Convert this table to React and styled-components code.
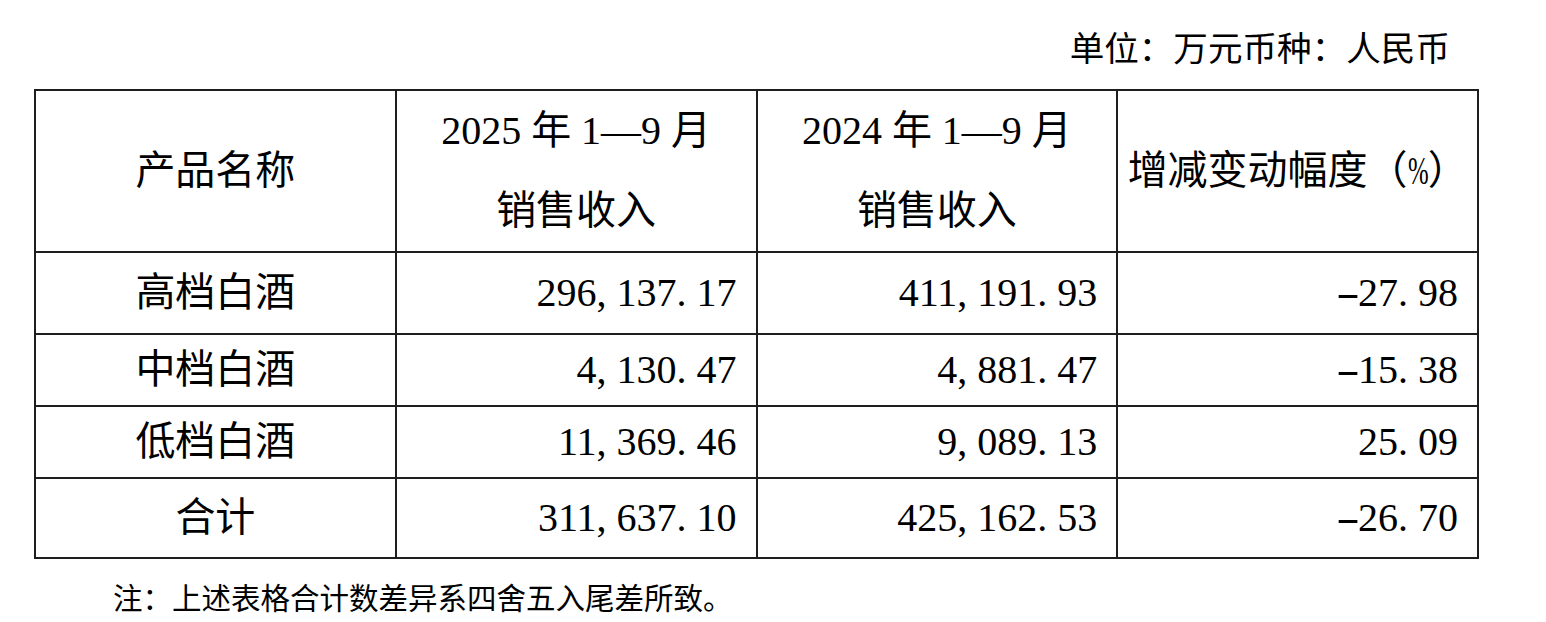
import React from 'react';
import styled, { createGlobalStyle } from 'styled-components';

const GlobalStyle = createGlobalStyle`
  html, body {
    margin: 0;
    padding: 0;
    background: #fff;
  }
  body {
    font-family: "Liberation Serif", "Noto Sans CJK SC", serif;
    color: #000;
  }
`;

const Page = styled.div`
  width: 1546px;
  height: 622px;
  padding: 29px 0 0 34px;
  box-sizing: border-box;
  display: flex;
  flex-direction: column;
`;

const Unit = styled.div`
  width: 1416px;
  text-align: right;
  font-size: 34.6px;
  line-height: 40px;
  margin-bottom: 20px;
`;

const Table = styled.table`
  width: 1445px;
  border-collapse: collapse;
  table-layout: fixed;
  font-size: 40px;
`;

const Row = styled.tr`
  height: ${props => props.h}px;
`;

const Cell = styled.td`
  border: 2px solid #1e1e1e;
  padding: 0 19px 0 0;
  text-align: ${props => (props.right ? 'right' : 'center')};
  vertical-align: middle;
  line-height: ${props => (props.tall ? '80px' : '44px')};
  white-space: nowrap;
  ${props => !props.right && 'padding: 0;'}
`;

const Mark = styled.span`
  display: inline-block;
  width: 0.5em;
  text-align: ${props => (props.dash ? 'center' : 'left')};
  transform: ${props => (props.dash ? 'scaleX(1.8)' : 'none')};
`;

const Pct = styled.span`
  display: inline-block;
  width: 0.5em;
  transform: scaleX(0.62);
  transform-origin: left center;
`;

const Note = styled.div`
  font-size: 29.5px;
  line-height: 36px;
  margin: 22px 0 0 79px;
`;

const rows = [
  { name: '高档白酒', a: '296,137.17', b: '411,191.93', c: '-27.98', h: 82 },
  { name: '中档白酒', a: '4,130.47', b: '4,881.47', c: '-15.38', h: 72 },
  { name: '低档白酒', a: '11,369.46', b: '9,089.13', c: '25.09', h: 72 },
  { name: '合计', a: '311,637.10', b: '425,162.53', c: '-26.70', h: 80 },
];

// digits are half-width already; give marks the same half-width box
const Num = ({ value }) => (
  <>
    {value.split('').map((ch, i) =>
      /[0-9]/.test(ch) ? ch : <Mark key={i} dash={ch === '-'}>{ch}</Mark>
    )}
  </>
);

export default function App() {
  return (
    <Page>
      <GlobalStyle />
      <Unit>单位：万元币种：人民币</Unit>
      <Table>
        <tbody>
          <Row h={159}>
            <Cell>产品名称</Cell>
            <Cell tall>2025 年 1—9 月<br />销售收入</Cell>
            <Cell tall>2024 年 1—9 月<br />销售收入</Cell>
            <Cell>增减变动幅度（<Pct>%</Pct>）</Cell>
          </Row>
          {rows.map(r => (
            <Row key={r.name} h={r.h}>
              <Cell>{r.name}</Cell>
              <Cell right><Num value={r.a} /></Cell>
              <Cell right><Num value={r.b} /></Cell>
              <Cell right><Num value={r.c} /></Cell>
            </Row>
          ))}
        </tbody>
      </Table>
      <Note>注：上述表格合计数差异系四舍五入尾差所致。</Note>
    </Page>
  );
}
